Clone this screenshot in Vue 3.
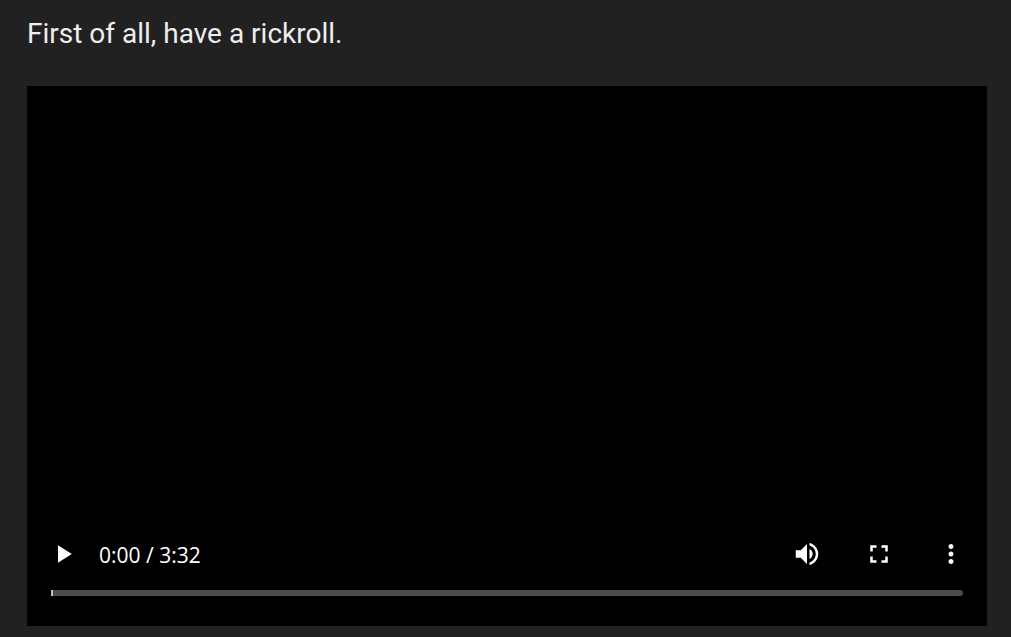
<script setup>
import { ref, computed } from 'vue'

const duration = 212
const current = ref(0)
const format = (s) => `${Math.floor(s / 60)}:${String(s % 60).padStart(2, '0')}`
const time = computed(() => `${format(Number(current.value))} / ${format(duration)}`)
</script>

<template>
  <main class="post">
    <p class="intro">First of all, have a rickroll.</p>
    <section class="player" aria-label="Video player">
      <div class="controls">
        <button type="button" aria-label="Play">
          <svg viewBox="0 0 24 24"><path d="M8 5v14l11-7z" /></svg>
        </button>
        <span class="time">{{ time }}</span>
        <button type="button" aria-label="Mute">
          <svg viewBox="0 0 24 24">
            <path d="M3 9v6h4l5 5V4L7 9H3zm13.5 3c0-1.77-1.02-3.29-2.5-4.03v8.05c1.48-.73 2.5-2.25 2.5-4.02zM14 3.23v2.06c2.89.86 5 3.54 5 6.71s-2.11 5.85-5 6.71v2.06c4.01-.91 7-4.49 7-8.77s-2.99-7.86-7-8.77z" />
          </svg>
        </button>
        <button type="button" aria-label="Full screen">
          <svg viewBox="0 0 24 24">
            <path d="M7 14H5v5h5v-2H7v-3zm-2-4h2V7h3V5H5v5zm12 7h-3v2h5v-5h-2v3zM14 5v2h3v3h2V5h-5z" />
          </svg>
        </button>
        <button type="button" aria-label="More options">
          <svg viewBox="0 0 24 24">
            <path d="M12 8c1.1 0 2-.9 2-2s-.9-2-2-2-2 .9-2 2 .9 2 2 2zm0 2c-1.1 0-2 .9-2 2s.9 2 2 2 2-.9 2-2-.9-2-2-2zm0 6c-1.1 0-2 .9-2 2s.9 2 2 2 2-.9 2-2-.9-2-2-2z" />
          </svg>
        </button>
      </div>
      <input v-model="current" class="timeline" type="range" min="0" :max="duration" aria-label="Seek" />
    </section>
  </main>
</template>

<style>
body {
  background: #212121;
}
</style>

<style scoped>
.post {
  padding: 16px 24px 11px 27px;
}
.intro {
  margin: 0 0 34px;
  font: 400 28px/36px Roboto, "Liberation Sans", sans-serif;
  color: #eee;
}
.player {
  display: flex;
  flex-direction: column;
  justify-content: flex-end;
  box-sizing: border-box;
  aspect-ratio: 16 / 9;
  padding-bottom: 30px;
  background: #000;
}
.controls {
  display: flex;
  align-items: center;
  height: 72px;
}
button {
  display: flex;
  align-items: center;
  justify-content: center;
  width: 72px;
  height: 72px;
  padding: 0;
  border: 0;
  background: none;
  cursor: pointer;
}
svg {
  width: 30px;
  height: 30px;
  fill: #fff;
}
.time {
  flex: 1;
  padding-top: 2px;
  font: 21px/28px "Open Sans", "Noto Sans", sans-serif;
  color: #fff;
}
.timeline {
  appearance: none;
  height: 6px;
  margin: 0 24px;
  border-radius: 0 3px 3px 0;
  overflow: hidden;
  background: #4d4d4d;
  cursor: pointer;
}
.timeline::-webkit-slider-thumb {
  appearance: none;
  width: 2px;
  height: 6px;
  background: #c8c0b8;
}
</style>
